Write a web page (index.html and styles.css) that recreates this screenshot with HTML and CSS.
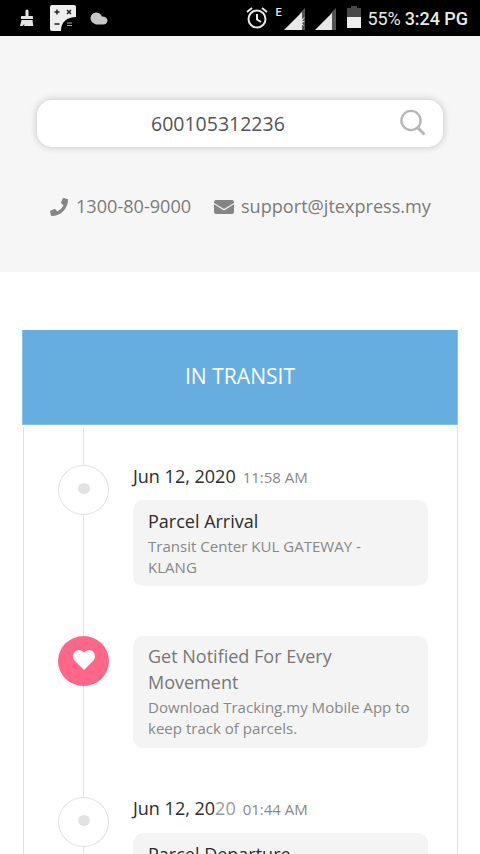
FILE: index.html
```
<!DOCTYPE html>
<html lang="en">
<head>
<meta charset="utf-8">
<title>Parcel tracking</title>
<link rel="stylesheet" href="styles.css">
</head>
<body>
<header class="status">
  <div class="status-left">
    <svg class="ic-brush" width="14" height="18" viewBox="0 0 14 18"><path fill="#e4e4e4" d="M5.500 1.500q1.500-2 3 0V7H12q1 0 1 1v2H1V8q0-1 1-1h3.500zM1.500 11h11l.8 6H4l.5-2L2.500 17H0z"/></svg>
    <svg class="ic-calc" width="26" height="26" viewBox="0 0 26 26"><path fill="#eee" d="M2 0h22q2 0 2 2v10C17 12 11 17 11 26H2q-2 0-2-2V2Q0 0 2 0z"/><path stroke="#222" stroke-width="1.500" d="M4.500 7h5M7 4.500v5M17 5l4 4M21 5l-4 4M4.500 19h5"/><path stroke="#aaa" stroke-width="1.200" d="M17 18h5M17 20.500h5"/></svg>
    <svg width="18" height="13" viewBox="0 0 18 13"><path fill="#c8c8c8" d="M6 0.500q4 0 6 4 5 0 5.500 4-.5 4-4.500 4H6Q.5 10.500.5 6 1 1 6 .5z"/></svg>
  </div>
  <div class="status-right">
    <svg class="ic-alarm" width="22" height="22" viewBox="0 0 22 22" fill="none" stroke="#e8e8e8" stroke-width="2"><circle cx="11" cy="12" r="8.500"/><path d="M11 7v5.500l4 2.500M1 5l5-4M16 1l5 4"/></svg>
    <span class="net">E</span>
    <svg class="ic-sig1" width="22" height="22" viewBox="0 0 22 22"><path fill="#555" d="M21 0v22h-5V5z"/><path fill="#e8e8e8" d="M0 22 18 4v7l3-2-3 4h3l-3 2 2 3-2-1v5z"/></svg>
    <svg class="ic-sig2" width="22" height="22" viewBox="0 0 22 22"><path fill="#555" d="M21 0v22h-5V5z"/><path fill="#e8e8e8" d="M0 22 17 5v17z"/></svg>
    <svg class="ic-bat" width="14" height="22" viewBox="0 0 14 22"><path fill="#484848" d="M4 0h6v2h4v9H0V2h4z"/><path fill="#eee" d="M0 11h14v11H0z"/></svg>
    <span class="pct">55%</span><span class="clock">3:24 PG</span>
  </div>
</header>
<section class="hero">
  <div class="search">
    <span class="number">600105312236</span>
    <svg width="28" height="28" viewBox="0 0 28 28" fill="none" stroke="#b5b5b5"><circle cx="12" cy="11.500" r="9.600" stroke-width="2.300"/><path stroke-width="3" d="m18.500 18.500 7 7"/></svg>
  </div>
  <div class="contacts">
    <svg width="18" height="18" viewBox="0 0 512 512"><path fill="#858585" d="M493 25 389 1c-11-3-23 3-27 14l-48 112c-4 10-1 21 7 28l61 50c-36 77-99 140-177 177l-50-61c-7-8-18-11-28-7L15 362c-11 4-17 16-14 27l24 104c3 11 12 19 24 19 256 0 463-207 463-463 0-12-8-21-19-24z"/></svg>
    <span class="phone">1300-80-9000</span>
    <svg class="ic-mail" width="20" height="14" viewBox="0 0 20 14"><path fill="#858585" d="M2 0h16q2 0 2 2v1l-10 6L0 3V2q0-2 2-2zM0 4.300l10 6.200 10-6.200V12q0 2-2 2H2q-2 0-2-2z"/></svg>
    <span class="email">support@jtexpress.my</span>
  </div>
</section>
<main class="panel">
  <h1 class="state">IN TRANSIT</h1>
  <div class="timeline">
    <article class="event">
      <div class="marker"><i class="dot"></i></div>
      <div class="body">
        <div class="when"><span class="date">Jun 12, 2020</span><span class="time">11:58 AM</span></div>
        <div class="card"><h2>Parcel Arrival</h2><p>Transit Center KUL GATEWAY -<br>KLANG</p></div>
      </div>
    </article>
    <article class="event promo">
      <div class="marker"><svg width="22" height="20" viewBox="0 0 22 20"><path fill="#fff" d="M11 20 1.800 10.800C-2 6 1 0 6 0q3 0 5 2.500Q13 0 16 0c5 0 8 6 4.200 10.800z"/></svg></div>
      <div class="body">
        <div class="card"><h2>Get Notified For Every<br>Movement</h2><p>Download Tracking.my Mobile App to<br>keep track of parcels.</p></div>
      </div>
    </article>
    <article class="event last">
      <div class="marker"><i class="dot"></i></div>
      <div class="body">
        <div class="when"><span class="date">Jun 12, 20<span class="fade">20</span></span><span class="time">01:44 AM</span></div>
        <div class="card"><h2>Parcel Departure -</h2></div>
      </div>
    </article>
  </div>
</main>
</body>
</html>
```
FILE: styles.css
```
* { box-sizing: border-box; }
html, body { height: 854px; overflow: hidden; }
body { margin: 0; background: #fff; font-family: "Open Sans", "Noto Sans", sans-serif; display: flex; flex-direction: column; }
svg { display: block; flex: none; }
h1, h2, p { margin: 0; font-weight: 400; }
span { white-space: nowrap; }

.status { height: 36px; flex: none; background: #000; color: #e8e8e8; display: flex; justify-content: space-between; align-items: center; padding: 0 12px 0 20px; font-family: Roboto, sans-serif; font-size: 18px; }
.status-left, .status-right { display: flex; align-items: center; }
.ic-calc { margin: 0 14px 0 16px; }
.status-right { height: 36px; }
.ic-alarm { margin-right: 8px; }
.net { font-size: 11px; font-weight: 500; line-height: 12px; margin-bottom: 11px; width: 8px; }
.ic-sig1 { margin-top: 2px; }
.ic-sig2 { margin: 2px 10px 0 9px; }
.ic-bat { margin: -2px 7px 0 0; }
.pct { margin-right: 4px; line-height: 36px; padding-top: 2px; letter-spacing: -0.100px; }
.clock { font-weight: 500; line-height: 36px; padding-top: 2px; letter-spacing: -0.050px; }

.hero { height: 236px; flex: none; background: #f6f6f6; padding: 64px 37px 0; }
.search { height: 47px; border-radius: 15px; background: #fff; box-shadow: 0 0 6px 1px #ccc; display: flex; align-items: center; justify-content: space-between; padding: 0 16px 0 114px; }
.number { font-size: 19.500px; color: #555; }
.search svg { margin-top: -2px; }
.contacts { display: flex; align-items: center; margin: 45px 0 0 13px; height: 28px; color: #7b7b7b; font-size: 18.100px; }
.contacts span { padding-bottom: 1px; }
.contacts svg { margin-top: 1px; }
.phone { margin-left: 8px; width: 138px; }
.email { margin-left: 7px; }

.panel { flex: none; width: 436px; margin: 58px 0 0 22px; }
.state { height: 95px; background: #66ade0; color: #fff; font-size: 21.100px; line-height: 92px; text-align: center; border: 1px solid #8bc0e6; border-top: 0; }
.timeline { height: 427px; margin: 2px 0 0 1px; border: solid #e2e2e2; border-width: 0 1px; padding: 38px 29px 0 34px; background: linear-gradient(#e2e2e2, #e2e2e2) 59px 0 / 1px 100% no-repeat; overflow: hidden; }
.event { display: flex; align-items: flex-start; margin-bottom: 50px; }
.marker { width: 51px; height: 50px; flex: none; border: 1px solid #e2e2e2; border-radius: 50%; background: #fff; display: flex; align-items: center; justify-content: center; }
.dot { width: 12px; height: 11px; border-radius: 50%; background: #e2e2e2; margin-bottom: 3px; }
.body { width: 295px; flex: none; margin-left: 24px; }
.when { height: 35px; display: flex; align-items: baseline; line-height: 22px; }
.last .when { height: 36px; }
.date { font-size: 18px; color: #2c2c2c; }
.fade { color: #999; }
.time { margin-left: 7px; font-size: 15px; color: #888; }
.card { background: #f4f4f4; border-radius: 10px; padding: 8px 15px 8px; }
.card h2 { font-size: 18px; line-height: 26px; color: #2c2c2c; white-space: nowrap; }
.card p { font-size: 15.050px; line-height: 21px; color: #888; white-space: nowrap; padding-top: 2px; }
.promo { margin-bottom: 49px; }
.promo .marker { background: #ff6688; border: 0; padding-bottom: 3px; }
.promo .card { padding-top: 7px; padding-bottom: 9px; }
.promo h2 { color: #777; }
```
